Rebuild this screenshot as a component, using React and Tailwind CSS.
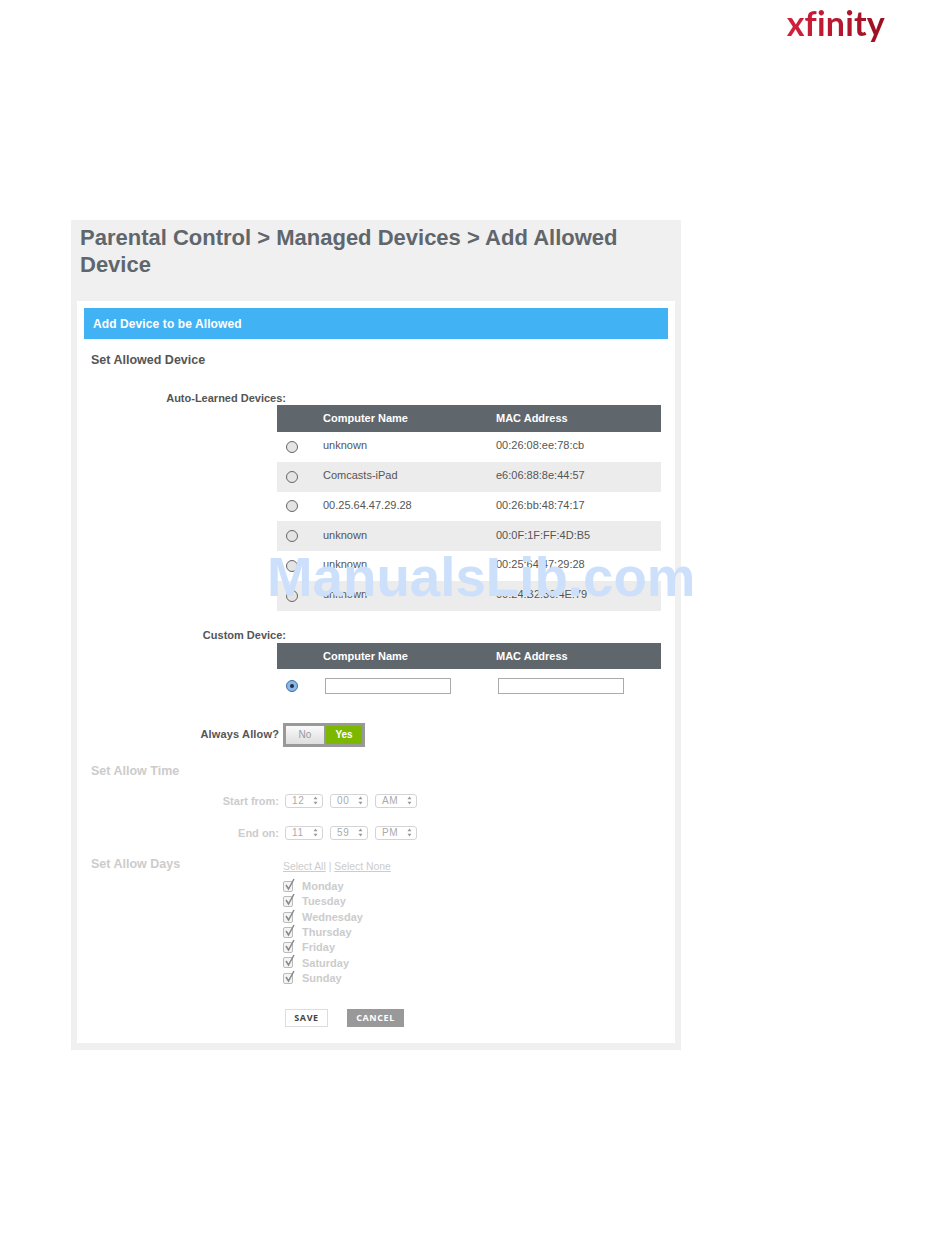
const rows = [
  ["unknown", "00:26:08:ee:78:cb"],
  ["Comcasts-iPad", "e6:06:88:8e:44:57"],
  ["00.25.64.47.29.28", "00:26:bb:48:74:17"],
  ["unknown", "00:0F:1F:FF:4D:B5"],
  ["unknown", "00:25:64:47:29:28"],
  ["unknown", "00:24:B2:36:4E:79"],
];
const days = ["Monday", "Tuesday", "Wednesday", "Thursday", "Friday", "Saturday", "Sunday"];

function Radio({ on }) {
  if (on) {
    return (
      <span className="w-[12px] h-[12px] rounded-full border border-[#3b6ea8] bg-[#8db8e6] flex items-center justify-center shrink-0">
        <span className="w-[4px] h-[4px] rounded-full bg-[#1c2f4a]" />
      </span>
    );
  }
  return <span className="w-[12px] h-[12px] rounded-full border border-[#666] bg-[#e4e4e4] shrink-0" />;
}

function Header() {
  return (
    <div className="flex items-center bg-[#5f666c] text-white font-bold text-[11px] h-full pl-[46px]">
      <span className="w-[173px]">Computer Name</span>
      <span>MAC Address</span>
    </div>
  );
}

function Sel({ v, w }) {
  return (
    <span className={`flex items-center justify-between h-[14px] border border-[#d4d4d4] rounded-[3px] bg-white text-[#aaa] text-[10px] tracking-[0.6px] pl-[6px] pr-[4px] ${w}`}>
      {v}
      <svg width="5" height="9" viewBox="0 0 5 9">
        <path d="M2.5 0.5 L4.5 3.2 H0.5 Z M2.5 8.5 L4.5 5.8 H0.5 Z" fill="#999" />
      </svg>
    </span>
  );
}

function TimeRow({ label, a, b, c, cls }) {
  return (
    <div className={`flex items-center h-[16px] ${cls}`}>
      <span className="w-[195px] text-right text-[#ccc] font-bold text-[11px]">{label}</span>
      <span className="ml-[6px] flex gap-[7px]">
        <Sel v={a} w="w-[38px]" />
        <Sel v={b} w="w-[38px]" />
        <Sel v={c} w="w-[42px]" />
      </span>
    </div>
  );
}

export default function App() {
  return (
    <div className="relative w-[950px] h-[1260px] bg-white overflow-hidden font-['Liberation_Sans',Arial,sans-serif]">
      <div className="flex justify-end pr-[65px] h-[220px] pt-[3px]">
        <span className="font-['Lato',sans-serif] text-[34px] leading-[40px] tracking-[0.2px] h-[44px] font-bold bg-gradient-to-r from-[#d4213d] to-[#9a0f22] bg-clip-text text-transparent">
          xfinity
        </span>
      </div>

      <div className="ml-[71px] w-[610px] h-[830px] bg-[#f0f0f0] pt-[4px] px-[6px]">
        <h1 className="pl-[3px] text-[22px] leading-[27px] font-bold text-[#5f666c] pr-[50px] h-[77px]">
          Parental Control &gt; Managed Devices &gt; Add Allowed Device
        </h1>
        <div className="bg-white h-[742px] w-[598px] px-[7px] pt-[7px]">
          <div className="h-[31px] bg-[#41b3f5] flex items-center pl-[9px] text-white font-bold text-[12px] tracking-[0.1px]">
            Add Device to be Allowed
          </div>
          <div className="pl-[7px] mt-[13px] h-[16px] leading-[16px] font-bold text-[12.5px] text-[#555]">Set Allowed Device</div>

          <div className="mt-[23px] h-[14px] w-[202px] text-right font-bold text-[11px] leading-[14px] text-[#555]">Auto-Learned Devices:</div>
          <div className="ml-[193px] w-[384px]">
            <div className="h-[27px]"><Header /></div>
            {rows.map((r, i) => (
              <div key={i} className={`flex items-center h-[29.8px] text-[11px] text-[#555] pl-[9px] ${i % 2 ? "bg-[#ececec]" : "bg-white"}`}>
                <span className="w-[37px] flex"><Radio /></span>
                <span className="w-[173px] mb-[3px]">{r[0]}</span>
                <span className="mb-[3px]">{r[1]}</span>
              </div>
            ))}
          </div>

          <div className="mt-[17px] h-[14px] w-[202px] text-right font-bold text-[11px] leading-[14px] text-[#555]">Custom Device:</div>
          <div className="ml-[193px] w-[384px]">
            <div className="h-[26px] mt-[1px]"><Header /></div>
            <div className="flex items-center h-[34px] pl-[9px]">
              <span className="w-[39px] flex"><Radio on /></span>
              <input className="w-[126px] h-[16px] border border-[#aaa] bg-white" />
              <input className="ml-[47px] w-[126px] h-[16px] border border-[#aaa] bg-white" />
            </div>
          </div>

          <div className="flex items-center mt-[20px] h-[24px]">
            <span className="w-[195px] text-right font-bold text-[11px] tracking-[0.15px] text-[#555] mb-[2px]">Always Allow?</span>
            <span className="ml-[4px] flex w-[82px] h-[24px] border-[3px] border-[#999] bg-[#999] gap-[2px]">
              <span className="w-[38px] flex items-center justify-center text-[10px] text-[#999] bg-gradient-to-b from-[#fafafa] to-[#dedede]">No</span>
              <span className="flex-1 flex items-center justify-center text-[10px] font-bold text-white bg-[#7db800]">Yes</span>
            </span>
          </div>

          <div className="pl-[7px] mt-[16px] h-[16px] leading-[16px] font-bold text-[12.5px] text-[#ccc]">Set Allow Time</div>
          <TimeRow label="Start from:" a="12" b="00" c="AM" cls="mt-[14px]" />
          <TimeRow label="End on:" a="11" b="59" c="PM" cls="mt-[16px]" />

          <div className="flex mt-[15px] h-[16px]">
            <span className="w-[199px] pl-[7px] leading-[16px] font-bold text-[12.5px] text-[#ccc]">Set Allow Days</span>
            <span className="pt-[4px] text-[10.4px] leading-[14px] text-[#ccc]">
              <span className="underline">Select All</span> | <span className="underline">Select None</span>
            </span>
          </div>

          <div className="ml-[199px] mt-[7px] flex flex-col">
            {days.map((d) => (
              <div key={d} className="flex items-center h-[15.3px]">
                <span className="relative w-[10px] h-[11px] border border-[#bbb] rounded-[2px] bg-[#f4f4f4]">
                  <svg className="absolute left-[0px] top-[-4px]" width="12" height="13" viewBox="0 0 12 13">
                    <path d="M2 7 L4.5 11 L10 1" fill="none" stroke="#888" strokeWidth="1.5" />
                  </svg>
                </span>
                <span className="ml-[9px] text-[11px] font-bold text-[#ccc]">{d}</span>
              </div>
            ))}
          </div>

          <div className="ml-[201px] mt-[23px] flex">
            <span className="w-[43px] h-[18px] flex items-center justify-center border border-[#ddd] bg-white text-[#444] font-['Open_Sans',sans-serif] font-bold text-[9px] tracking-[0.6px]">SAVE</span>
            <span className="ml-[19px] w-[57px] h-[18px] flex items-center justify-center bg-[#999] text-white font-['Open_Sans',sans-serif] font-bold text-[9px] tracking-[0.6px]">CANCEL</span>
          </div>
        </div>
      </div>

      <div className="absolute left-[267px] top-[544px] text-[54.7px] leading-[66px] font-bold text-[#cde0fb] whitespace-nowrap">
        ManualsLib.com
      </div>
    </div>
  );
}
